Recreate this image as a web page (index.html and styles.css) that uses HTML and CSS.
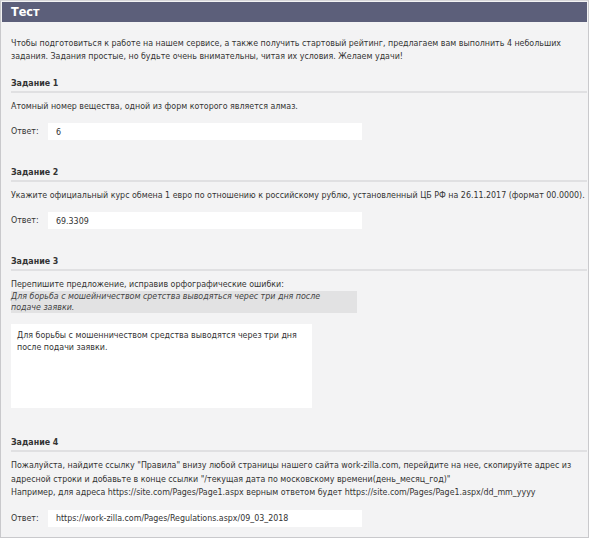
FILE: index.html
```html
<!DOCTYPE html>
<html lang="ru">
<head>
  <meta charset="UTF-8" />
  <title>Тест</title>
  <link rel="stylesheet" href="styles.css">
</head>
<body>
  <div class="frame">
    <div class="head">Тест</div>
    <div class="content">
      <p class="intro">Чтобы подготовиться к работе на нашем сервисе, а также получить стартовый рейтинг, предлагаем вам выполнить 4 небольших задания. Задания простые, но будьте очень внимательны, читая их условия. Желаем удачи!</p>

      <div class="task">
        <div class="title">Задание 1</div>
        <p class="text">Атомный номер вещества, одной из форм которого является алмаз.</p>
        <div class="answer">
          <span class="label">Ответ:</span>
          <input class="field" type="text" value="6">
        </div>
      </div>

      <div class="task">
        <div class="title">Задание 2</div>
        <p class="text">Укажите официальный курс обмена 1 евро по отношению к российскому рублю, установленный ЦБ РФ на 26.11.2017 (формат 00.0000).</p>
        <div class="answer">
          <span class="label">Ответ:</span>
          <input class="field" type="text" value="69.3309">
        </div>
      </div>

      <div class="task">
        <div class="title">Задание 3</div>
        <p class="text">Перепишите предложение, исправив орфографические ошибки:</p>
        <div class="quote">Для борьба с мошейничеством сретства выводяться черес три дня после подаче заявки.</div>
        <textarea class="area">Для борьбы с мошенничеством средства выводятся через три дня после подачи заявки.</textarea>
      </div>

      <div class="task last">
        <div class="title">Задание 4</div>
        <p class="text">Пожалуйста, найдите ссылку "Правила" внизу любой страницы нашего сайта work-zilla.com, перейдите на нее, скопируйте адрес из адресной строки и добавьте в конце ссылки "/текущая дата по московскому времени(день_месяц_год)"<br>Например, для адреса https://site.com/Pages/Page1.aspx верным ответом будет https://site.com/Pages/Page1.aspx/dd_mm_yyyy</p>
        <div class="answer">
          <span class="label">Ответ:</span>
          <input class="field" type="text" value="https://work-zilla.com/Pages/Regulations.aspx/09_03_2018">
        </div>
      </div>
    </div>
  </div>
</body>
</html>
```

FILE: styles.css
```css
* { box-sizing: border-box; }
html, body { margin: 0; padding: 0; background: #fff; color: #333; font-family: "DejaVu Sans Condensed", "DejaVu Sans", sans-serif; font-stretch: condensed; font-size: 8.8px; line-height: 13px; }
.frame { width: 589px; height: 538px; border: 1px solid #c9c9cc; border-top-color: #d6d6d9; background: #f3f3f4; padding: 1px; overflow: hidden; }
.head { height: 20px; background: #5c5f7a; color: #fff; font-weight: bold; font-size: 12.5px; line-height: 20px; padding-left: 9px; }
.content { padding: 15px 0 0 9px; }
p { margin: 0; }
.task { margin-top: 14px; }
.task + .task { margin-top: 26px; }
.title { font-weight: bold; border-bottom: 2px solid #e0e0e2; padding-bottom: 1px; }
.text { margin-top: 7px; }
.answer { display: flex; align-items: center; margin-top: 10px; }
.label { width: 37px; }
.field { width: 314px; height: 17px; border: none; background: #fff; padding: 0 8px; font: inherit; color: #333; outline: none; }
.quote { margin-top: 0; width: 346px; padding-right: 22px; background: #e2e2e3; font-style: italic; color: #444; line-height: 11px; }
.area { display: block; margin-top: 11px; width: 301px; height: 84px; border: none; background: #fff; resize: none; padding: 5px 6px; font: inherit; color: #333; line-height: 12px; outline: none; }
.task.last { margin-top: 28px; }
.task.last .text { line-height: 13.5px; }
```
